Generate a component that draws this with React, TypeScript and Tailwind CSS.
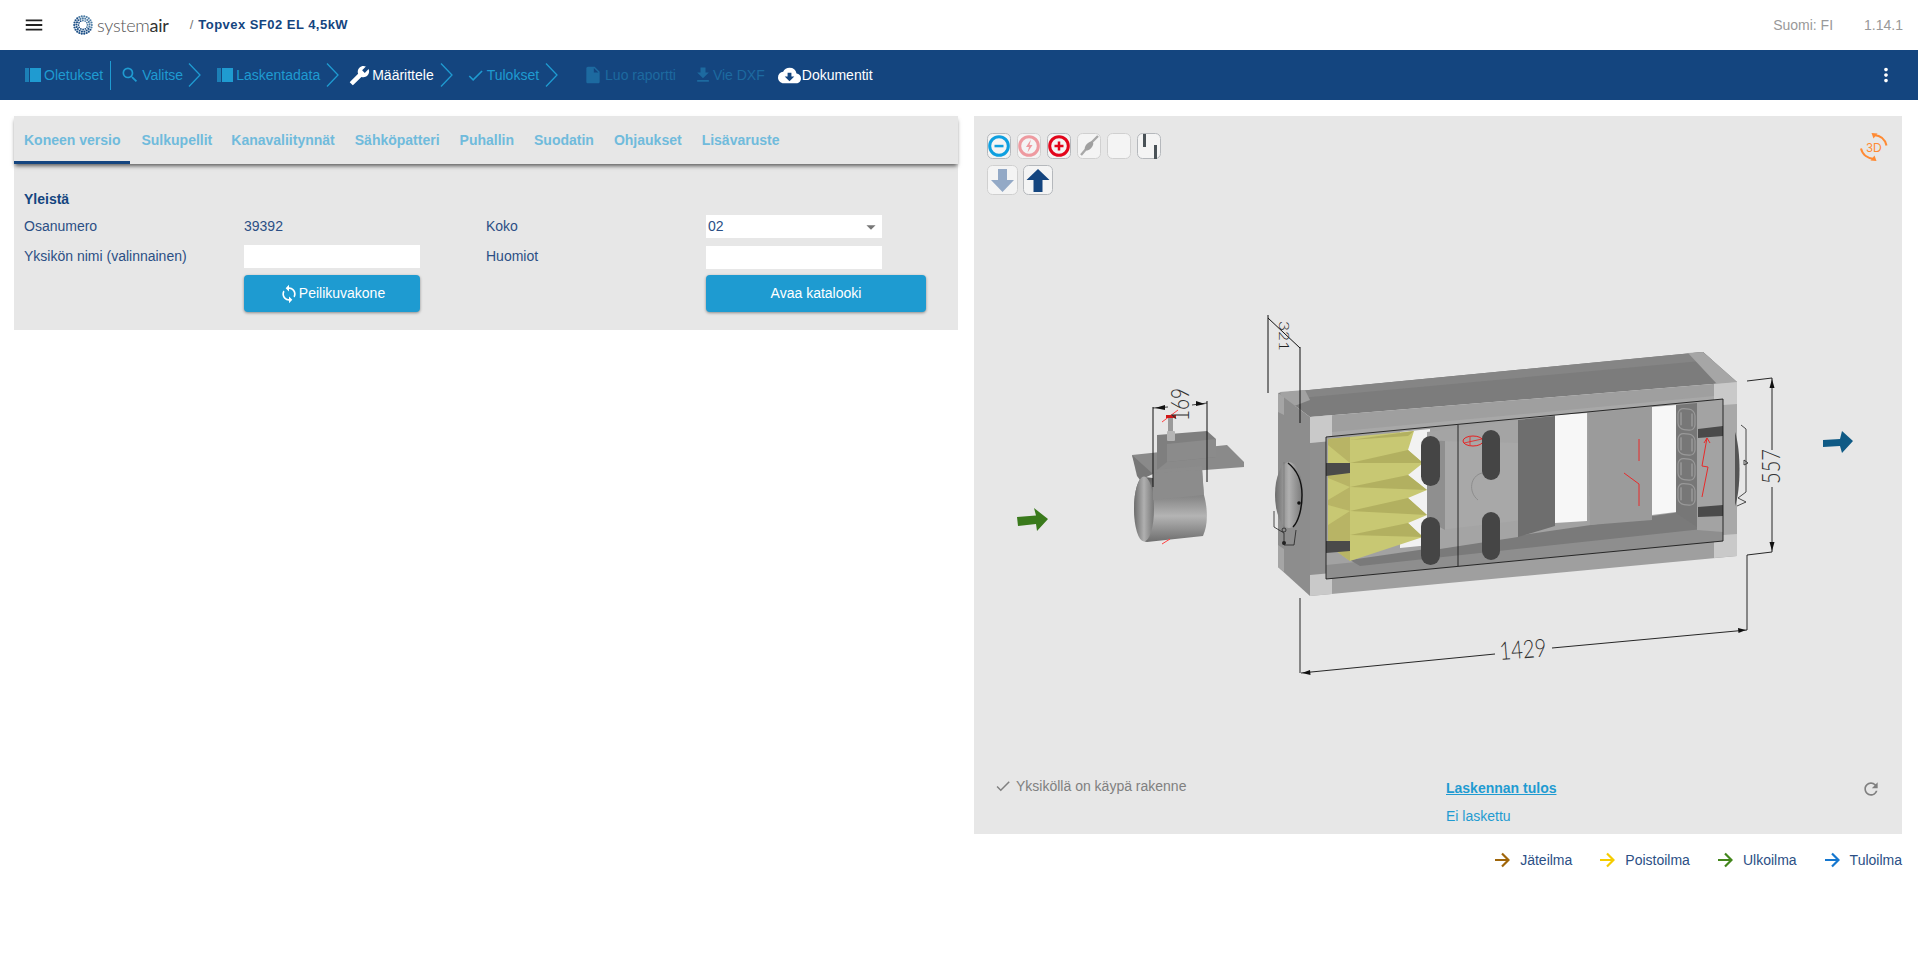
import React from "react";
import { MdMenu, MdSearch, MdBuild, MdCheck, MdInsertDriveFile, MdFileDownload, MdCloudDownload, MdMoreVert, MdSync, MdRefresh, MdArrowDropDown } from "react-icons/md";

const font = { fontFamily: '"Liberation Sans", Arial, sans-serif' };

function BookIcon() {
  return (
    <svg width="16" height="14" viewBox="0 0 16 14" className="shrink-0">
      <rect x="0" y="0" width="4" height="14" fill="#1c7fb6" />
      <rect x="5" y="0" width="11" height="14" fill="#1f9bd1" />
    </svg>
  );
}

function Chevron() {
  return (
    <svg width="13" height="24" viewBox="0 0 13 24" className="shrink-0">
      <path d="M1 0.5 L12 12 L1 23.5" fill="none" stroke="#1f9bd1" strokeWidth="1.3" />
    </svg>
  );
}

function Logo() {
  const dots: React.ReactElement[] = [];
  const rings = [
    { r: 8.8, n: 22, s: 1.1 },
    { r: 6.6, n: 17, s: 1.05 },
    { r: 4.5, n: 12, s: 0.9 },
  ];
  rings.forEach((ring, i) => {
    for (let k = 0; k < ring.n; k++) {
      const a = (k / ring.n) * Math.PI * 2 + i * 0.25;
      const shade = Math.cos(a - 2.4) > -0.3 ? "#1c4f86" : "#4f7ea6";
      dots.push(<circle key={`${i}-${k}`} cx={10 + ring.r * Math.cos(a)} cy={10 + ring.r * Math.sin(a)} r={ring.s} fill={shade} />);
    }
  });
  return (
    <svg width="20" height="20" viewBox="0 0 20 20" className="shrink-0">
      {dots}
    </svg>
  );
}

function Header() {
  return (
    <header className="h-[50px] bg-white flex items-center">
      <MdMenu className="ml-[23px] text-[#222]" size={22} />
      <div className="ml-[28px] flex items-center">
        <Logo />
        <span className="ml-[4px] text-[18px] leading-none tracking-[-0.25px] text-[#555]" style={{ fontFamily: '"Lato", sans-serif', fontWeight: 300 }}>
          system<span className="text-[#333]" style={{ fontWeight: 400 }}>air</span>
        </span>
      </div>
      <span className="ml-[21px] text-[13px] text-[#777]">/</span>
      <span className="ml-[5px] text-[13px] font-bold tracking-[0.47px] text-[#14457f]">Topvex SF02 EL 4,5kW</span>
      <div className="ml-auto flex items-center text-[14px] text-[#999] pr-[15px]">
        <span>Suomi: FI</span>
        <span className="ml-[31px]">1.14.1</span>
      </div>
    </header>
  );
}

function NavBar() {
  return (
    <nav className="h-[50px] bg-[#14457f] flex items-center text-[14px] text-[#1f9bd1] pl-[25px] pr-[21px]">
      <BookIcon />
      <span className="ml-[3px]">Oletukset</span>
      <span className="ml-[7px] w-px h-[29px] bg-[#1f9bd1]" />
      <MdSearch className="ml-[9px]" size={20} />
      <span className="ml-[2px]">Valitse</span>
      <span className="ml-[5px]"><Chevron /></span>
      <span className="ml-[16px]"><BookIcon /></span>
      <span className="ml-[3px]">Laskentadata</span>
      <span className="ml-[6px]"><Chevron /></span>
      <MdBuild className="ml-[10px] text-white -scale-x-100" size={21} />
      <span className="ml-[2px] text-white">Määrittele</span>
      <span className="ml-[6px]"><Chevron /></span>
      <MdCheck className="ml-[13px]" size={19} />
      <span className="ml-[2px]">Tulokset</span>
      <span className="ml-[6px]"><Chevron /></span>
      <MdInsertDriveFile className="ml-[25px] text-[#1d6aa0]" size={20} />
      <span className="ml-[2px] text-[#1d6aa0]">Luo raportti</span>
      <MdFileDownload className="ml-[17px] text-[#1d6aa0]" size={20} />
      <span className="text-[#1d6aa0]">Vie DXF</span>
      <MdCloudDownload className="ml-[13px] text-white" size={23} />
      <span className="ml-[1px] text-white">Dokumentit</span>
      <MdMoreVert className="ml-auto text-white" size={22} />
    </nav>
  );
}

const tabs = ["Koneen versio", "Sulkupellit", "Kanavaliitynnät", "Sähköpatteri", "Puhallin", "Suodatin", "Ohjaukset", "Lisävaruste"];

function LeftPanel() {
  return (
    <section className="w-[944px] h-[214px] bg-[#e7e7e7] text-[14px] text-[#2b4f85]">
      <div className="relative h-[48px] flex shadow-[0_3px_4px_-1px_rgba(0,0,0,0.6)]">
        {tabs.map((t, i) => (
          <div key={t} className={`relative h-[48px] flex items-center font-bold text-[#70bbdc] ${i === 0 ? "pl-[10px] pr-[11px]" : i === 1 ? "pl-[10px] pr-[9px]" : "px-[10px]"}`}>
            {t}
            {i === 0 && <span className="absolute left-0 right-[1px] bottom-0 h-[3px] bg-[#14457f]" />}
          </div>
        ))}
      </div>
      <div className="pl-[10px] pt-[27px] grid grid-cols-[220px_242px_220px_220px]">
        <div className="col-span-4 h-[16px] leading-[16px] font-bold text-[#14457f]">Yleistä</div>
        <div className="h-[29px] mt-[5px] flex items-center">Osanumero</div>
        <div className="h-[29px] mt-[5px] flex items-center">39392</div>
        <div className="h-[29px] mt-[5px] flex items-center">Koko</div>
        <div className="h-[29px] mt-[5px] flex items-center">
          <div className="w-[176px] h-[23px] bg-white flex items-center justify-between pl-[2px]">
            <span>02</span>
            <MdArrowDropDown className="text-[#777]" size={22} />
          </div>
        </div>
        <div className="h-[29px] mt-[1px] flex items-center">Yksikön nimi (valinnainen)</div>
        <div className="h-[29px] mt-[1px] flex items-center"><div className="w-[176px] h-[23px] bg-white" /></div>
        <div className="h-[29px] mt-[1px] flex items-center">Huomiot</div>
        <div className="h-[29px] mt-[1px] flex items-center"><div className="w-[176px] h-[23px] bg-white translate-y-[1px]" /></div>
        <div />
        <div className="w-[176px] h-[37px] mt-[4px] rounded-[4px] bg-[#1e9bd1] shadow-[0_1px_3px_rgba(0,0,0,0.4)] text-white flex items-center justify-center">
          <MdSync size={20} />
          <span>Peilikuvakone</span>
        </div>
        <div />
        <div className="w-[220px] h-[37px] mt-[4px] rounded-[4px] bg-[#1e9bd1] shadow-[0_1px_3px_rgba(0,0,0,0.4)] text-white flex items-center justify-center">
          Avaa katalooki
        </div>
      </div>
    </section>
  );
}

function ToolBtn({ w = 24, h = 26, dim, children }: { w?: number; h?: number; dim?: boolean; children?: React.ReactNode }) {
  return (
    <svg width={w} height={h} viewBox={`0 0 ${w} ${h}`} className="shrink-0">
      <rect x="0.5" y="0.5" width={w - 1} height={h - 1} rx="5" fill="#f4f4f4" stroke={dim ? "#d0d0d0" : "#b5b8bc"} />
      {children}
    </svg>
  );
}

function Toolbar() {
  return (
    <div className="relative pl-[13px] pt-[17px]">
      <div className="flex gap-[6px]">
        <ToolBtn>
          <circle cx="12" cy="13" r="9.3" fill="none" stroke="#0ea0e0" strokeWidth="3" />
          <rect x="7.5" y="11.8" width="9" height="2.5" fill="#0ea0e0" />
        </ToolBtn>
        <ToolBtn dim>
          <circle cx="12" cy="13" r="9.3" fill="none" stroke="#ee9aa0" strokeWidth="3" />
          <path d="M14 6.5 L9 14 H12 L10.5 19.5 L15.5 12 H12.5 Z" fill="#ee9aa0" />
        </ToolBtn>
        <ToolBtn>
          <circle cx="12" cy="13" r="9.3" fill="none" stroke="#e3051b" strokeWidth="3" />
          <path d="M7.5 13 H16.5 M12 8.5 V17.5" stroke="#e3051b" strokeWidth="2.5" />
        </ToolBtn>
        <ToolBtn dim>
          <path d="M4 22 L10 15 M14 10 L21 3" stroke="#a8a8a8" strokeWidth="2.4" />
          <ellipse cx="12" cy="13" rx="5.5" ry="3" transform="rotate(-48 12 13)" fill="#a0a0a0" />
        </ToolBtn>
        <ToolBtn dim />
        <ToolBtn>
          <rect x="6" y="1" width="3" height="13" fill="#4a5257" />
          <rect x="17" y="12" width="3" height="14" fill="#4a5257" />
        </ToolBtn>
      </div>
      <div className="flex gap-[5px] mt-[6px]">
        <ToolBtn w={31} h={30} dim>
          <path d="M11 4 H20 V15 H27 L15.5 27 L4 15 H11 Z" fill="#93a9c6" />
        </ToolBtn>
        <ToolBtn w={30} h={30}>
          <path d="M10.5 27 V15 H3.5 L15 4 L26.5 15 H19.5 V27 Z" fill="#14457f" />
        </ToolBtn>
      </div>
      <svg width="30" height="30" viewBox="0 0 30 30" className="absolute right-[13px] top-[16px]">
        <path d="M15 3 C21 3.5 26 7 27.5 13.5" fill="none" stroke="#ff8a33" strokeWidth="2" />
        <path d="M12.5 1 L18.5 1.5 L14.5 6.5 Z" fill="#ff8a33" />
        <path d="M15 27 C9 26.5 3.5 23 2 16.5" fill="none" stroke="#ff8a33" strokeWidth="2" />
        <path d="M17.5 29 L11.5 28.5 L15.5 23.5 Z" fill="#ff8a33" />
        <text x="15" y="19.5" textAnchor="middle" fontSize="12" fill="#ff8a33" style={font}>3D</text>
      </svg>
    </div>
  );
}

function Diagram() {
  const thin = { fontFamily: '"Lato", sans-serif', fontWeight: 300 } as React.CSSProperties;
  return (
    <svg className="absolute inset-0" width="928" height="718" viewBox="974 116 928 718">
      <defs>
        <linearGradient id="cyl" x1="0" y1="0" x2="0" y2="1">
          <stop offset="0" stopColor="#5f5f5f" />
          <stop offset="0.35" stopColor="#8e8e8e" />
          <stop offset="0.6" stopColor="#b4b4b4" />
          <stop offset="1" stopColor="#6e6e6e" />
        </linearGradient>
        <linearGradient id="cylIn" x1="0" y1="0" x2="1" y2="0">
          <stop offset="0" stopColor="#6c6c6c" />
          <stop offset="0.5" stopColor="#b0b0b0" />
          <stop offset="1" stopColor="#777" />
        </linearGradient>
      </defs>

      {/* inlet arrow */}
      <path d="M1017 517 L1036 515.5 L1034 508 L1048 519 L1037 531 L1036 524 L1018 526 Z" fill="#3a7a1c" />
      {/* outlet arrow */}
      <path d="M1823 440 L1840 439 L1842 431 L1853 441 L1842 453 L1840 446 L1823 447 Z" fill="#0f5a85" />

      {/* damper */}
      <path d="M1132 455 L1227 445 L1244 462 L1244 467 L1153 474 L1137 470 Z" fill="#8a8a8a" />
      <path d="M1132 455 L1137 476 L1140 480 L1153 474 Z" fill="#777" />
      <path d="M1157 435 L1207 431 L1216 439 L1216 457 L1167 462 L1157 470 Z" fill="#7f7f7f" />
      <path d="M1167 444 L1216 439 L1216 457 L1167 462 Z" fill="#8b8b8b" />
      <rect x="1168" y="418" width="5" height="16" fill="#9a9a9a" />
      <rect x="1167" y="431" width="8" height="10" rx="1" fill="#b5b5b5" />
      <path d="M1153 470 L1202 466 L1204 500 L1153 505 Z" fill="#8c8c8c" />
      <path d="M1144 477 L1153 478 L1204 495 C1208 510 1208 525 1203 536 L1147 542 C1140 542 1134 525 1134 508 C1134 492 1138 477 1144 477 Z" fill="url(#cyl)" />
      <ellipse cx="1144" cy="509" rx="10" ry="32.5" fill="url(#cylIn)" />
      <path d="M1153 500 L1204 495 L1202 470 L1153 473 Z" fill="#8c8c8c" />
      <path d="M1162 422 L1178 410" stroke="#ff4040" strokeWidth="1" />
      <rect x="1166" y="415" width="10" height="3" fill="#d01818" />
      <path d="M1162 544 L1170 539" stroke="#ff4040" strokeWidth="1" />

      {/* 169 dimension */}
      <path d="M1153 407 V487 M1207 401 V482" stroke="#111" strokeWidth="1" />
      <path d="M1153 408 L1168 407 M1192 405 L1207 403" stroke="#111" strokeWidth="0.8" />
      <path d="M1155 408 L1165 405 L1165 410 Z M1205 404 L1196 401 L1196 406 Z" fill="#111" />
      <text transform="translate(1189 421) rotate(-90)" fontSize="25" textLength="33" lengthAdjust="spacingAndGlyphs" fill="#333" style={thin}>169</text>

      {/* box: top, side */}
      <path d="M1278 393 L1703 352 L1737 382 L1310 417 Z" fill="#7c7c7c" />
      <path d="M1278 393 L1703 352 L1712 360 L1300 398 Z" fill="#858585" />
      <path d="M1280 392 L1305 390 L1310 400 L1284 410 Z" fill="#a2a2a2" />
      <path d="M1688 353 L1703 352 L1737 382 L1717 384 Z" fill="#a6a6a6" />
      <path d="M1278 393 L1310 417 L1310 596 L1278 567 Z" fill="#8d8d8d" />
      <path d="M1278 393 L1284 397 L1284 415 L1278 412 Z M1278 545 L1284 549 L1284 572 L1278 567 Z" fill="#a5a5a5" />
      {/* front frame */}
      <path d="M1310 417 L1737 382 L1737 556 L1310 596 Z" fill="#9f9f9f" />
      <path d="M1310 443 L1326 441 L1326 578 L1310 580 Z" fill="#8f8f8f" />
      <path d="M1310 417 L1332 415 L1332 441 L1310 443 Z M1310 575 L1332 573 L1332 594 L1310 596 Z" fill="#c9c9c9" />
      <path d="M1714 384 L1737 382 L1737 405 L1714 407 Z M1714 535 L1737 533 L1737 556 L1714 558 Z" fill="#c9c9c9" />
      <path d="M1723 405 L1737 404 L1737 534 L1723 535 Z" fill="#a8a8a8" />
      <path d="M1332 432 L1714 396 L1714 401 L1332 437 Z" fill="#a8a8a8" />

      {/* interior */}
      <path d="M1326 437 L1723 399 L1723 541 L1326 579 Z" fill="#a2a2a2" />
      <path d="M1326 565 L1723 526 L1723 541 L1326 579 Z" fill="#8e8e8e" />
      <path d="M1350 560 L1680 512 L1712 528 L1360 566 Z" fill="#7a7a7a" />
      {/* white openings */}
      <path d="M1555 415 L1587 413 L1587 521 L1555 523 Z" fill="#f7f7f7" />
      <path d="M1652 407 L1676 405 L1676 512 L1652 515 Z" fill="#f7f7f7" />
      <path d="M1400 432 L1430 429 L1430 545 L1400 548 Z" fill="#f2f2f2" />
      {/* filter */}
      <path d="M1328 439 L1414 431 L1408 450 L1423 463 L1408 475 L1427 490 L1408 498 L1427 515 L1408 523 L1423 537 L1350 561 L1328 545 Z" fill="#c8c873" />
      <path d="M1350 440 L1414 431 L1408 436 Z M1350 463 L1408 450 L1423 463 Z M1350 487 L1408 475 L1427 490 Z M1350 511 L1408 498 L1427 515 Z M1350 535 L1408 523 L1423 537 Z" fill="#b2b060" />
      <path d="M1328 439 L1350 437 L1350 561 L1328 545 Z" fill="#b8b465" />
      <path d="M1328 445 L1350 463 L1328 472 Z M1328 478 L1350 487 L1328 500 Z M1328 505 L1350 511 L1328 525 Z" fill="#c8c873" />
      <path d="M1326 463 L1350 463 L1350 473 L1326 476 Z M1326 541 L1350 541 L1350 551 L1326 553 Z" fill="#4a4a4a" />

      {/* fan section */}
      <path d="M1427 432 L1518 420 L1518 537 L1440 549 L1427 540 Z" fill="#a4a4a4" />
      <path d="M1440 441 L1523 443 L1523 520 L1440 530 Z" fill="#a8a8a8" />
      <path d="M1427 440 L1445 441 L1445 530 L1427 520 Z" fill="#8f8f8f" />
      <path d="M1518 420 L1555 416 L1555 526 L1518 537 Z" fill="#6e6e6e" />
      <path d="M1482 473 C1470 476 1468 492 1478 500" fill="none" stroke="#8d8d8d" strokeWidth="1" />
      <ellipse cx="1473" cy="441" rx="10" ry="5" fill="none" stroke="#e82020" strokeWidth="1" />
      <path d="M1464 443 L1482 439 M1470 437 L1470 445" stroke="#e82020" strokeWidth="0.8" />
      {/* handles */}
      <rect x="1421" y="436" width="19" height="50" rx="9.5" fill="#454545" />
      <rect x="1421" y="517" width="19" height="48" rx="9.5" fill="#454545" />
      <rect x="1482" y="430" width="18" height="50" rx="9" fill="#454545" />
      <rect x="1482" y="512" width="18" height="48" rx="9" fill="#454545" />

      {/* heater panel */}
      <path d="M1588 413 L1652 407 L1652 520 L1590 525 Z" fill="#9b9b9b" />
      <path d="M1639 439 V461 M1624 473 L1639 484 V506" fill="none" stroke="#e82a2a" strokeWidth="1" />
      <path d="M1676 405 L1697 403 L1697 527 L1676 513 Z" fill="#777" />
      {[0, 1, 2, 3].map((i) => (
        <g key={i} transform={`translate(1678 ${408 + i * 25}) skewY(6)`}>
          <rect x="0" y="0" width="17" height="21" rx="6" fill="none" stroke="#999" strokeWidth="1.2" />
          <path d="M3 4 V17 M14 4 V17" stroke="#b5b5b5" strokeWidth="0.8" />
        </g>
      ))}
      <path d="M1697 402 L1723 399 L1723 532 L1697 530 Z" fill="#a3a3a3" />
      <path d="M1698 429 L1723 426 L1723 436 L1698 438 Z M1698 507 L1723 505 L1723 516 L1698 517 Z" fill="#4a4a4a" />
      <path d="M1702 497 L1708 467 L1702 466 L1707 438 M1704 443 L1707 438 L1710 443" fill="none" stroke="#e82a2a" strokeWidth="1" />
      <path d="M1735 432 C1741 450 1741 490 1735 506 Z" fill="#555" />

      {/* inlet connector */}
      <ellipse cx="1289" cy="495" rx="14" ry="33" fill="url(#cylIn)" />
      <path d="M1288 463 C1297 470 1302 482 1302 495 C1302 510 1298 522 1293 527" fill="none" stroke="#111" strokeWidth="1.4" />
      <path d="M1284 462 V528" stroke="#666" strokeWidth="0.5" />
      <circle cx="1299" cy="503" r="1.8" fill="#111" />
      <path d="M1274 511 V527 L1284 533 V545 L1294 545 L1296 530" fill="none" stroke="#222" strokeWidth="0.8" />
      <circle cx="1284" cy="530" r="2" fill="none" stroke="#222" strokeWidth="0.8" />
      <circle cx="1284" cy="543" r="2" fill="#222" />

      {/* window outline */}
      <path d="M1326 437 L1723 399 L1723 541 L1326 579 Z M1458 425 V566" fill="none" stroke="#1a1a1a" strokeWidth="0.9" />

      {/* dimensions */}
      <path d="M1268 315 V393 M1300 347 V423 M1268 318 L1300 348" fill="none" stroke="#111" strokeWidth="1" />
      <text transform="translate(1279 321) rotate(90)" fontSize="14" textLength="30" lengthAdjust="spacingAndGlyphs" fill="#222" style={thin}>321</text>
      <path d="M1747 381 L1772 378 V450 M1772 487 V552 L1747 555 V630" fill="none" stroke="#111" strokeWidth="0.9" />
      <path d="M1772 379 L1769.5 388 H1774.5 Z M1772 551 L1769.5 542 H1774.5 Z" fill="#111" />
      <text transform="translate(1780 484) rotate(-90)" fontSize="25" textLength="35" lengthAdjust="spacingAndGlyphs" fill="#333" style={thin}>557</text>
      <path d="M1300 598 V673 M1301 673 L1495 654 M1552 648 L1747 630" fill="none" stroke="#111" strokeWidth="0.9" />
      <path d="M1302 673 L1310 670 L1310.5 675 Z M1746 630 L1738 628 L1738.5 633 Z" fill="#111" />
      <text transform="translate(1500 660) rotate(-4.5)" fontSize="25" textLength="47" lengthAdjust="spacingAndGlyphs" fill="#333" style={thin}>1429</text>
      <path d="M1741 425 L1746 429 L1746 492 L1738 498 L1746 502 L1737 506 M1744 460 L1748 463 L1744 465 Z" fill="none" stroke="#222" strokeWidth="0.8" />
    </svg>
  );
}

function RightPanel() {
  return (
    <section className="relative w-[928px] h-[718px] bg-[#e7e7e7] flex flex-col">
      <Diagram />
      <Toolbar />
      <div className="relative mt-auto h-[63px] grid grid-cols-[472px_1fr_auto] text-[14px]">
        <div className="pl-[20px] mt-[5px] h-[20px] flex items-center text-[#808080]">
          <MdCheck size={18} />
          <span className="ml-[4px]">Yksiköllä on käypä rakenne</span>
        </div>
        <div>
          <div className="h-[20px] mt-[7px] leading-[20px] font-bold underline text-[#1f9bd1]">Laskennan tulos</div>
          <div className="h-[20px] mt-[8px] leading-[20px] text-[#1f9bd1]">Ei laskettu</div>
        </div>
        <MdRefresh className="mr-[21px] mt-[8px] text-[#808080]" size={20} />
      </div>
    </section>
  );
}

const legend = [
  { label: "Jäteilma", color: "#a0660a" },
  { label: "Poistoilma", color: "#f5cc00" },
  { label: "Ulkoilma", color: "#43861c" },
  { label: "Tuloilma", color: "#1577cf" },
];

function Legend() {
  return (
    <div className="h-[30px] mt-[11px] flex justify-end items-center gap-[28px] text-[14px] text-[#2b4f85]">
      {legend.map((l) => (
        <div key={l.label} className="flex items-center gap-[10px]">
          <svg width="15" height="16" viewBox="0 0 15 16" className="shrink-0">
            <path d="M0 8 H13 M7 1.5 L13.5 8 L7 14.5" fill="none" stroke={l.color} strokeWidth="2.2" />
          </svg>
          <span>{l.label}</span>
        </div>
      ))}
    </div>
  );
}

export default function App() {
  return (
    <div className="w-full h-[966px] bg-white overflow-hidden" style={font}>
      <Header />
      <NavBar />
      <main className="flex gap-[16px] pl-[14px] pt-[16px]">
        <LeftPanel />
        <div className="w-[928px]">
          <RightPanel />
          <Legend />
        </div>
      </main>
    </div>
  );
}
